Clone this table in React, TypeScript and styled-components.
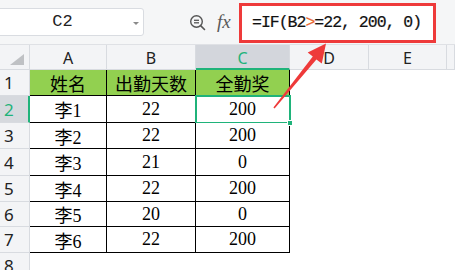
import React from 'react';
import styled, { createGlobalStyle } from 'styled-components';

const GREEN = '#1fb37a';
const RED = '#ee3a3a';

const rows = [
  ['姓名', '出勤天数', '全勤奖'],
  ['李1', '22', '200'],
  ['李2', '22', '200'],
  ['李3', '21', '0'],
  ['李4', '22', '200'],
  ['李5', '20', '0'],
  ['李6', '22', '200'],
];

const columns = ['A', 'B', 'C', 'D', 'E', ''];

function App() {
  return (
    <Page>
      <GlobalStyle />
      <Toolbar>
        <NameBox>
          C2
          <Caret />
        </NameBox>
        <Tools>
          <svg width="18" height="18" viewBox="0 0 18 18">
            <circle cx="7.5" cy="7.5" r="5.8" fill="none" stroke="#555" strokeWidth="1.4" />
            <line x1="5" y1="6.3" x2="10" y2="6.3" stroke="#555" strokeWidth="1.3" />
            <line x1="5" y1="8.8" x2="10" y2="8.8" stroke="#555" strokeWidth="1.3" />
            <line x1="11.6" y1="11.6" x2="15.5" y2="15.5" stroke="#555" strokeWidth="1.6" strokeLinecap="round" />
          </svg>
          <Fx>fx</Fx>
        </Tools>
        <Formula>
          =IF(B2<Op>&gt;</Op>=22, 200, 0)
        </Formula>
      </Toolbar>

      <Sheet>
        <Corner>
          <CornerMark />
        </Corner>
        {columns.map((c, i) => (
          <ColHeader key={i} $active={c === 'C'}>
            {c}
          </ColHeader>
        ))}

        {rows.map((r, ri) => (
          <React.Fragment key={ri}>
            <RowHeader $active={ri === 1}>{ri + 1}</RowHeader>
            {r.map((v, ci) => (
              <Cell key={ci} $head={ri === 0} $selected={ri === 1 && ci === 2}>
                {v}
                {ri === 1 && ci === 2 && <Handle />}
              </Cell>
            ))}
            <Blank />
            <Blank />
            <Blank />
          </React.Fragment>
        ))}
        <RowHeader $active={false}>8</RowHeader>
        <Blank />
        <Blank />
        <Blank />
        <Blank />
        <Blank />
        <Blank />
      </Sheet>

      <Arrow width="455" height="270" viewBox="0 0 455 270">
        <polygon
          fill={RED}
          points="273.4,107.6 312.8,56.6 307.7,52.6 326,43.5 321.8,63.4 316.4,59.4 274.6,108.4"
        />
      </Arrow>
    </Page>
  );
}

const GlobalStyle = createGlobalStyle`
  * { box-sizing: border-box; }
  html, body { margin: 0; padding: 0; background: #fff; }
  body { font-family: "Noto Sans", "Noto Sans CJK SC", sans-serif; }
`;

const Page = styled.div`
  position: relative;
  width: 455px;
  height: 270px;
  overflow: hidden;
  background: #fff;
`;

const Toolbar = styled.div`
  height: 45px;
  background: #f5f6f7;
  display: flex;
  align-items: center;
  border-bottom: 1px solid #dfe1e5;
`;

const NameBox = styled.div`
  position: relative;
  width: 145px;
  height: 28px;
  margin-left: -1px;
  margin-top: -1px;
  background: #fff;
  border: 1px solid #d9dce1;
  border-radius: 0 3px 3px 0;
  display: flex;
  align-items: center;
  justify-content: center;
  padding-right: 18px;
  font-family: "Liberation Mono", monospace;
  font-size: 17px;
  color: #222;
`;

const Caret = styled.span`
  position: absolute;
  right: 4px;
  top: 13px;
  border-left: 3px solid transparent;
  border-right: 3px solid transparent;
  border-top: 3px solid #8a8a8a;
`;

const Tools = styled.div`
  display: flex;
  align-items: center;
  gap: 10px;
  margin-left: 45px;
  width: 50px;
  padding-top: 1px;
`;

const Fx = styled.span`
  font-family: "Liberation Serif", serif;
  font-style: italic;
  font-size: 19px;
  color: #5a5a5a;
  line-height: 1;
  margin-top: -2px;
`;

const Formula = styled.div`
  width: 197px;
  height: 40px;
  margin-top: 1px;
  border: 3px solid ${RED};
  background: #fff;
  display: flex;
  align-items: center;
  padding-left: 10px;
  font-family: "Liberation Mono", monospace;
  font-size: 16.5px;
  letter-spacing: -1px;
  color: #111;
  white-space: pre;
  -webkit-text-stroke: 0.2px #111;
`;

const Op = styled.span`
  color: #e8652f;
  -webkit-text-stroke: 0.2px #e8652f;
`;

const Sheet = styled.div`
  display: grid;
  grid-template-columns: 30px 77px 89px 94px 79px 78px 1fr;
  grid-template-rows: 25px 26px 27px 26px 27px 26px 25px 26px 26px;
`;

const Corner = styled.div`
  position: relative;
  background: #f3f4f6;
  border-right: 1px solid #d8dbe0;
  border-bottom: 1px solid #d8dbe0;
`;

const CornerMark = styled.span`
  position: absolute;
  right: 5px;
  bottom: 4px;
  width: 0;
  height: 0;
  border-left: 14px solid transparent;
  border-bottom: 11px solid #bfc1c4;
`;

const ColHeader = styled.div<{ $active: boolean }>`
  background: ${({ $active }) => ($active ? '#d3d6dc' : '#f3f4f6')};
  border-right: 1px solid #d8dbe0;
  border-bottom: ${({ $active }) => ($active ? `2px solid ${GREEN}` : '1px solid #d8dbe0')};
  color: ${({ $active }) => ($active ? GREEN : '#222')};
  font-size: 16px;
  display: flex;
  align-items: center;
  justify-content: center;
  padding-top: 2px;
`;

const RowHeader = styled.div<{ $active: boolean }>`
  background: ${({ $active }) => ($active ? '#d6d9de' : '#f3f4f6')};
  border-right: ${({ $active }) => ($active ? `2px solid ${GREEN}` : '1px solid #d8dbe0')};
  border-bottom: 1px solid #d8dbe0;
  color: ${({ $active }) => ($active ? GREEN : '#222')};
  font-size: 17px;
  display: flex;
  align-items: center;
  padding-left: 4px;
`;

const Cell = styled.div<{ $head: boolean; $selected: boolean }>`
  position: relative;
  background: ${({ $head }) => ($head ? '#92d050' : '#fff')};
  border-right: 1px solid #000;
  border-bottom: 1px solid #000;
  display: flex;
  align-items: center;
  justify-content: center;
  font-family: "Liberation Serif", "Noto Sans CJK SC", serif;
  font-size: 18px;
  color: #000;
  &::after {
    content: '';
    display: ${({ $selected }) => ($selected ? 'block' : 'none')};
    position: absolute;
    top: -1px;
    left: -1px;
    right: -2px;
    bottom: -2px;
    border: 2px solid ${GREEN};
  }
`;

const Handle = styled.span`
  position: absolute;
  right: -4px;
  bottom: -4px;
  width: 6px;
  height: 6px;
  background: ${GREEN};
  border: 1px solid #fff;
  z-index: 1;
`;

const Blank = styled.div`
  background: #fff;
`;

const Arrow = styled.svg`
  position: absolute;
  left: 0;
  top: 0;
  pointer-events: none;
`;

export default App;
